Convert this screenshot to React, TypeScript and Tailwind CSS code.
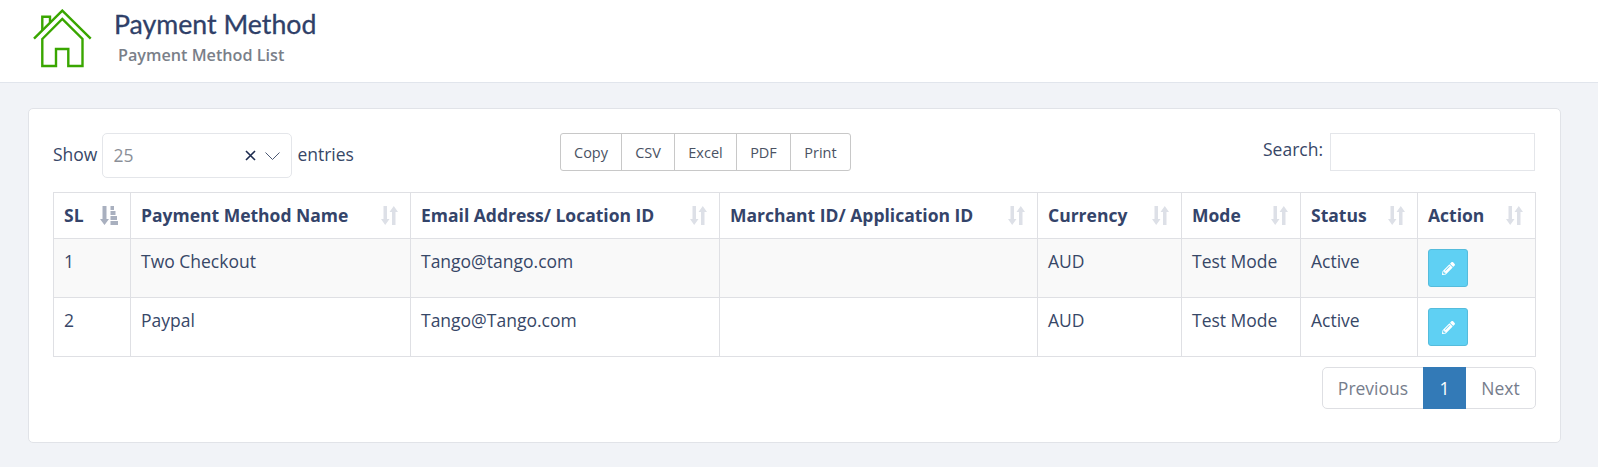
import { FaPencilAlt } from 'react-icons/fa';

const columns = [
  { label: 'SL', width: 'w-[77px]', sorted: true },
  { label: 'Payment Method Name', width: 'w-[280px]' },
  { label: 'Email Address/ Location ID', width: 'w-[309px]' },
  { label: 'Marchant ID/ Application ID', width: 'w-[318px]' },
  { label: 'Currency', width: 'w-[144px]' },
  { label: 'Mode', width: 'w-[119px]' },
  { label: 'Status', width: 'w-[117px]' },
  { label: 'Action', width: 'w-[118px]' },
];

const rows = [
  { sl: '1', name: 'Two Checkout', email: 'Tango@tango.com' },
  { sl: '2', name: 'Paypal', email: 'Tango@Tango.com' },
];

function HomeIcon() {
  return (
    <svg width="60" height="60" viewBox="0 0 60 60" fill="none" stroke="#39a600" strokeWidth="2.4" className="shrink-0">
      <path d="M1 29.7 L29.3 1.6 L57.7 29.7" />
      <path d="M9.3 21 V7.7 H17 V13.5" />
      <path d="M9.3 30 L29.3 10 L49.5 30 V57 H35.3 V40 H23 V57 H9.3 Z" />
    </svg>
  );
}

function SortIcon({ sorted }: { sorted?: boolean }) {
  if (sorted) {
    return (
      <svg width="18" height="19" viewBox="0 0 18 19" fill="#a9b0bf" className="shrink-0">
        <path d="M2.5 0 H6.5 V13 H9 L4.5 19 L0 13 H2.5 Z" />
        <rect x="10.5" y="0" width="3.5" height="4" />
        <rect x="10.5" y="5" width="5" height="4" />
        <rect x="10.5" y="10" width="6.5" height="4" />
        <rect x="10.5" y="15" width="7.5" height="4" />
      </svg>
    );
  }
  return (
    <svg width="17" height="19" viewBox="0 0 17 19" fill="#dde0e7" className="shrink-0">
      <path d="M2.5 0 H6 V13 H8.5 L4.2 19 L0 13 H2.5 Z" />
      <path d="M11 19 H14.5 V6 H17 L12.8 0 L8.5 6 H11 Z" />
    </svg>
  );
}

export default function App() {
  return (
    <div className="min-h-[467px] bg-[#f1f3f7] font-['Open_Sans','Noto_Sans',sans-serif] text-[17.5px] text-[#374767]">
      <header className="h-[83px] bg-white border-b border-[#e1e5ec] flex items-start pl-[33px] pt-[9px]">
        <HomeIcon />
        <div className="ml-[21px]">
          <h1 className="-mt-[1px] font-['Lato',sans-serif] text-[26.7px] leading-[32px] text-[#2f4068] [-webkit-text-stroke:0.3px_#2f4068]">Payment Method</h1>
          <p className="ml-[4px] mt-[4px] text-[16.2px] leading-[22px] font-semibold text-[#7a7f89]">Payment Method List</p>
        </div>
      </header>

      <main className="pt-[25px] px-[28px]">
        <section className="w-[1533px] h-[335px] bg-white border border-[#e1e3e8] rounded-[5px] px-[24px] pt-[24px]">
          <div className="flex items-start h-[59px]">
            <div className="w-[507px] flex items-center h-[45px]">
              <span className="-mt-[3px]">Show</span>
              <div className="ml-[5px] w-[190px] h-[45px] border border-[#e4e6ea] rounded-[5px] flex items-center pl-[10px] pr-[11px]">
                <span className="flex-1 text-[#8b8f98]">25</span>
                <svg width="11" height="11" viewBox="0 0 11 11" stroke="#1d2b4f" strokeWidth="1.6" className="mr-[9px]">
                  <path d="M1 1 L10 10 M10 1 L1 10" />
                </svg>
                <svg width="15" height="8" viewBox="0 0 15 8" fill="none" stroke="#4b5873" strokeWidth="1">
                  <path d="M0.5 0.5 L7.5 7.5 L14.5 0.5" />
                </svg>
              </div>
              <span className="ml-[5px] -mt-[3px]">entries</span>
            </div>
            <div className="flex h-[38px] border border-[#c8c8c8] rounded-[3px] text-[14.5px] text-[#4a5263]">
              <span className="w-[61px] pt-[2px] flex items-center justify-center border-r border-[#c8c8c8]">Copy</span>
              <span className="w-[53px] pt-[2px] flex items-center justify-center border-r border-[#c8c8c8]">CSV</span>
              <span className="w-[62px] pt-[2px] flex items-center justify-center border-r border-[#c8c8c8]">Excel</span>
              <span className="w-[54px] pt-[2px] flex items-center justify-center border-r border-[#c8c8c8]">PDF</span>
              <span className="w-[59px] pt-[2px] flex items-center justify-center">Print</span>
            </div>
            <div className="ml-auto mr-[1px] flex items-start">
              <span className="leading-[32px]">Search:</span>
              <div className="ml-[7px] w-[205px] h-[38px] border border-[#e4e6ea]" />
            </div>
          </div>

          <table className="w-[1482px] table-fixed border-collapse">
            <thead>
              <tr className="h-[46px]">
                {columns.map((c) => (
                  <th key={c.label} className={`${c.width} border border-[#dfe0e4] px-[10px] text-left font-bold text-[#34446a] whitespace-nowrap`}>
                    <div className="flex items-center justify-between pr-[2px]">
                      <span>{c.label}</span>
                      <SortIcon sorted={c.sorted} />
                    </div>
                  </th>
                ))}
              </tr>
            </thead>
            <tbody>
              {rows.map((r, i) => (
                <tr key={r.sl} className={`h-[59px] ${i === 0 ? 'bg-[#f9f9f9]' : 'bg-white'}`}>
                  {[r.sl, r.name, r.email, '', 'AUD', 'Test Mode', 'Active'].map((v, j) => (
                    <td key={j} className="border border-[#dfe0e4] px-[10px] pt-[10px] align-top leading-[25px]">{v}</td>
                  ))}
                  <td className="border border-[#dfe0e4] px-[10px] pt-[10px] align-top">
                    <div className="w-[40px] h-[38px] bg-[#5fd0f3] border border-[#55bcdc] rounded-[3px] flex items-center justify-center">
                      <FaPencilAlt className="text-white text-[13px]" />
                    </div>
                  </td>
                </tr>
              ))}
            </tbody>
          </table>

          <div className="flex justify-end mt-[10px]">
            <div className="flex h-[42px] border border-[#dedfe3] rounded-[5px] text-[#767d8c]">
              <span className="w-[100px] flex items-center justify-center">Previous</span>
              <span className="w-[43px] -my-[1px] flex items-center justify-center bg-[#337ab7] text-white">1</span>
              <span className="w-[69px] flex items-center justify-center">Next</span>
            </div>
          </div>
        </section>
      </main>
    </div>
  );
}
